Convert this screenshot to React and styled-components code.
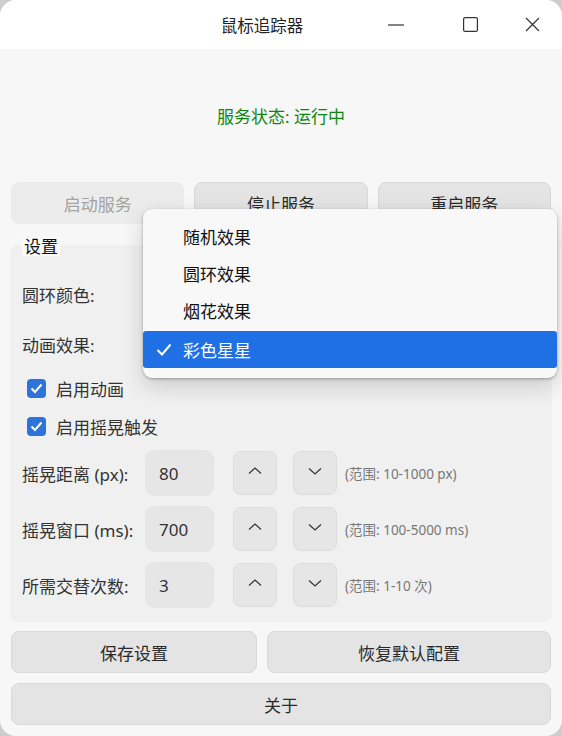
import React, { useState } from "react";
import styled, { createGlobalStyle } from "styled-components";

const GlobalStyle = createGlobalStyle`
  html, body {
    margin: 0;
    padding: 0;
    background: #cdcdcd;
  }
  body {
    font-family: "Noto Sans", "Noto Sans CJK SC", sans-serif;
    color: #222;
  }
`;

const Window = styled.div`
  position: relative;
  width: 562px;
  height: 736px;
  background: #f7f7f7;
  border-radius: 16px;
  overflow: hidden;
  display: flex;
  flex-direction: column;
`;

const TitleBar = styled.div`
  height: 49px;
  background: #ffffff;
  display: flex;
  align-items: center;
  flex-shrink: 0;
`;

const Title = styled.div`
  flex: 1;
  text-align: center;
  font-size: 16.5px;
  color: #222;
  padding-left: 158px;
`;

const WinButtons = styled.div`
  display: flex;
  align-items: center;
  padding-right: 12px;
`;

const WinButton = styled.div`
  width: ${(p) => p.w || 60}px;
  height: 49px;
  display: flex;
  align-items: center;
  justify-content: center;
`;

const Body = styled.div`
  flex: 1;
  display: flex;
  flex-direction: column;
  padding: 0 10px 11px;
`;

const Status = styled.div`
  height: 133px;
  display: flex;
  align-items: center;
  justify-content: center;
  color: #0f870f;
  font-size: 17px;
  box-sizing: border-box;
`;

const ButtonRow = styled.div`
  display: grid;
  grid-template-columns: ${(p) => p.cols || "1fr 1fr 1fr"};
  gap: 10px;
  padding: 0 1px;
`;

const Button = styled.button`
  height: 42px;
  border: 1px solid ${(p) => (p.disabled ? "#ebebeb" : "#d9d9d9")};
  background: ${(p) => (p.disabled ? "#ececec" : "#e4e4e4")};
  color: ${(p) => (p.disabled ? "#a3a3a3" : "#2a2a2a")};
  border-radius: 8px;
  font-family: inherit;
  font-size: 17px;
  padding: 0;
`;

const Group = styled.div`
  margin-top: 21px;
  background: #f0f0f0;
  border-radius: 8px;
  padding: 0 12px 14px;
  display: flex;
  flex-direction: column;
  gap: 10px;
`;

const Legend = styled.div`
  align-self: flex-start;
  margin-top: -8px;
  margin-bottom: 8px;
  background: #fafafa;
  padding: 0 2px;
  font-size: 17px;
  line-height: 19px;
  color: #111;
`;

const Row = styled.div`
  height: ${(p) => p.h}px;
  display: flex;
  align-items: center;
`;

const Label = styled.div`
  width: 123px;
  font-size: 17px;
  color: #333;
  flex-shrink: 0;
`;

const ColorButton = styled.div`
  width: 120px;
  height: 34px;
  border-radius: 8px;
  background: #3a8cf0;
`;

const Combo = styled.div`
  width: 200px;
  height: 36px;
  border-radius: 8px;
  background: #e6e6e6;
`;

const CheckRow = styled.label`
  height: 28px;
  display: flex;
  align-items: center;
  gap: 10px;
  padding-left: 5px;
  font-size: 17px;
  color: #333;
`;

const CheckBox = styled.span`
  width: 19px;
  height: 19px;
  border-radius: 4px;
  background: #2e73da;
  display: flex;
  align-items: center;
  justify-content: center;
`;

const SpinInput = styled.div`
  width: 69px;
  height: 46px;
  border-radius: 9px;
  background: #e6e6e6;
  display: flex;
  align-items: center;
  padding-left: 14px;
  box-sizing: border-box;
  font-size: 17px;
  color: #333;
`;

const StepButton = styled.div`
  width: 44px;
  height: 44px;
  margin-left: ${(p) => p.ml}px;
  border-radius: 8px;
  background: #e6e6e6;
  border: 1px solid #dcdcdc;
  box-sizing: border-box;
  display: flex;
  align-items: center;
  justify-content: center;
  padding-bottom: ${(p) => (p.up ? 6 : 4)}px;
`;

const Range = styled.div`
  margin-left: 8px;
  font-size: 13.5px;
  color: #777;
`;

const BottomArea = styled.div`
  margin-top: 9px;
  display: flex;
  flex-direction: column;
  gap: 10px;
`;

const Popup = styled.div`
  position: absolute;
  left: 143px;
  top: 209px;
  width: 414px;
  height: 169px;
  box-sizing: border-box;
  padding: 9px 0 10px;
  background: #f8f8f8;
  border-radius: 9px;
  box-shadow: 0 1px 3px rgba(0, 0, 0, 0.3), 0 8px 22px rgba(0, 0, 0, 0.16);
`;

const Item = styled.div`
  height: 37px;
  display: flex;
  align-items: center;
  padding-left: 40px;
  position: relative;
  font-size: 17px;
  color: ${(p) => (p.selected ? "#fff" : "#111")};
  background: ${(p) => (p.selected ? "#1f6fe5" : "transparent")};
  border-radius: ${(p) => (p.selected ? "3px" : "0")};
  margin-top: ${(p) => (p.selected ? 2 : 0)}px;
`;

const ItemCheck = styled.svg`
  position: absolute;
  left: 13px;
  top: 12px;
`;

const Chevron = ({ up }) => (
  <svg width="14" height="7" viewBox="0 0 14 7">
    <polyline
      points={up ? "1,6.5 7,1 13,6.5" : "1,0.5 7,6 13,0.5"}
      fill="none"
      stroke="#333"
      strokeWidth="1.2"
    />
  </svg>
);

const spins = [
  { label: "摇晃距离 (px):", value: "80", range: "(范围: 10-1000 px)" },
  { label: "摇晃窗口 (ms):", value: "700", range: "(范围: 100-5000 ms)" },
  { label: "所需交替次数:", value: "3", range: "(范围: 1-10 次)" },
];

const effects = ["随机效果", "圆环效果", "烟花效果", "彩色星星"];

const Tick = () => (
  <svg width="13" height="11" viewBox="0 0 13 11">
    <polyline points="1.5,5.5 5,9 11.5,1.5" fill="none" stroke="#fff" strokeWidth="2" />
  </svg>
);

const App = () => {
  const [selected] = useState(3);

  return (
    <>
      <GlobalStyle />
      <Window>
        <TitleBar>
          <Title>鼠标追踪器</Title>
          <WinButtons>
            <WinButton w={60}>
              <svg width="16" height="2" viewBox="0 0 16 2">
                <line x1="0" y1="1" x2="16" y2="1" stroke="#333" strokeWidth="1.2" />
              </svg>
            </WinButton>
            <WinButton w={88}>
              <svg width="15" height="15" viewBox="0 0 15 15">
                <rect x="0.6" y="0.6" width="13.8" height="13.8" rx="1.5" fill="none" stroke="#333" strokeWidth="1.2" />
              </svg>
            </WinButton>
            <WinButton w={36}>
              <svg width="15" height="15" viewBox="0 0 15 15">
                <path d="M1 1 L14 14 M14 1 L1 14" stroke="#333" strokeWidth="1.2" />
              </svg>
            </WinButton>
          </WinButtons>
        </TitleBar>

        <Body>
          <Status>服务状态: 运行中</Status>

          <ButtonRow>
            <Button disabled>启动服务</Button>
            <Button>停止服务</Button>
            <Button>重启服务</Button>
          </ButtonRow>

          <Group>
            <Legend>设置</Legend>
            <Row h={40}>
              <Label>圆环颜色:</Label>
              <ColorButton />
            </Row>
            <Row h={40}>
              <Label>动画效果:</Label>
              <Combo />
            </Row>
            <CheckRow>
              <CheckBox>
                <Tick />
              </CheckBox>
              启用动画
            </CheckRow>
            <CheckRow>
              <CheckBox>
                <Tick />
              </CheckBox>
              启用摇晃触发
            </CheckRow>
            {spins.map((s) => (
              <Row h={46} key={s.label}>
                <Label>{s.label}</Label>
                <SpinInput>{s.value}</SpinInput>
                <StepButton ml={19} up>
                  <Chevron up />
                </StepButton>
                <StepButton ml={16}>
                  <Chevron />
                </StepButton>
                <Range>{s.range}</Range>
              </Row>
            ))}
          </Group>

          <BottomArea>
            <ButtonRow cols="246fr 284fr">
              <Button>保存设置</Button>
              <Button>恢复默认配置</Button>
            </ButtonRow>
            <ButtonRow cols="1fr">
              <Button>关于</Button>
            </ButtonRow>
          </BottomArea>
        </Body>

        <Popup>
          {effects.map((e, i) => (
            <Item key={e} selected={i === selected}>
              {i === selected && (
                <ItemCheck width="16" height="13" viewBox="0 0 16 13">
                  <polyline points="1.5,7 6,11.5 14.5,1.5" fill="none" stroke="#fff" strokeWidth="2" />
                </ItemCheck>
              )}
              {e}
            </Item>
          ))}
        </Popup>
      </Window>
    </>
  );
};

export default App;
